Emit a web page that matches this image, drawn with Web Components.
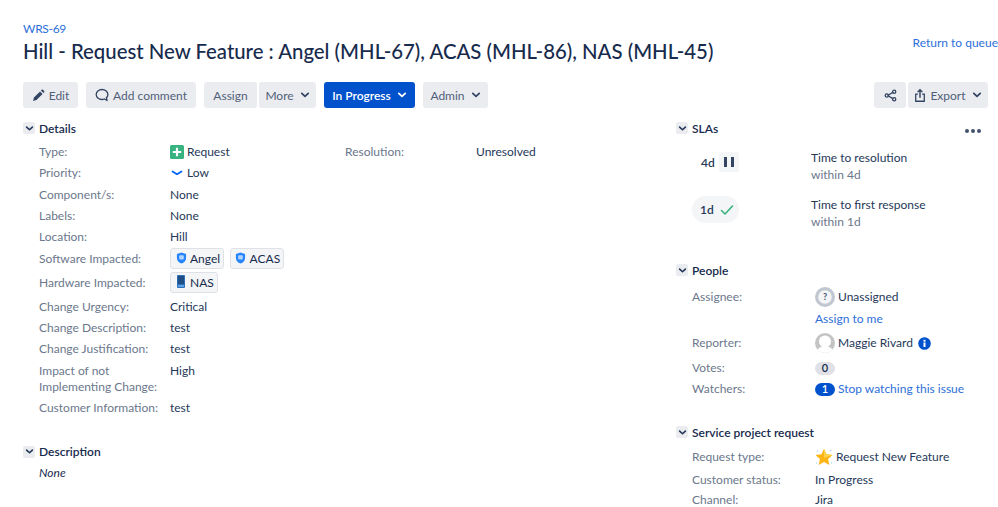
<!DOCTYPE html>
<html>
<head>
<meta charset="utf-8">
<title>WRS-69</title>
<style>
  html, body { margin: 0; padding: 0; background: #fff; overflow: hidden; }
  body { font-family: Lato, "Noto Sans", sans-serif; font-size: 12px; color: #172b4d; }
</style>
</head>
<body>
<issue-page></issue-page>

<script>
const ICONS = {
  chevron: `<svg width="10" height="10" viewBox="0 0 10 10"><path d="M1.8 3.4 5 6.4l3.2-3" fill="none" stroke="currentColor" stroke-width="1.8" stroke-linecap="round" stroke-linejoin="round"/></svg>`,
  pencil: `<svg width="13" height="13" viewBox="0 0 14 14"><path d="M1.2 12.8l.9-3.6 6.6-6.6 2.7 2.7-6.6 6.6zM9.6 1.7l.8-.8c.4-.4 1-.4 1.4 0l1.3 1.3c.4.4.4 1 0 1.4l-.8.8z" fill="#344563"/></svg>`,
  comment: `<svg width="14" height="14" viewBox="0 0 14 14"><path d="M7 1.500C3.700 1.500 1.200 3.700 1.200 6.500s2.500 5 5.800 5c1 0 1.700-.2 2.500-.5l2.600 1.500-.7-2.700c1-.9 1.500-2.100 1.500-3.300 0-2.800-2.600-5-5.900-5z" fill="none" stroke="#344563" stroke-width="1.300" stroke-linejoin="round"/></svg>`,
  share: `<svg width="13" height="13" viewBox="0 0 14 14"><g fill="none" stroke="#344563" stroke-width="1.400"><path d="M4 7l6-3.600M4 7l6 3.600"/><circle cx="3" cy="7" r="1.700"/><circle cx="11" cy="3" r="1.700"/><circle cx="11" cy="11" r="1.700"/></g></svg>`,
  exportIcon: `<svg width="12" height="15" viewBox="0 0 14 16"><path d="M4.500 6.500H2v8.200h10V6.500H9.500" fill="none" stroke="#344563" stroke-width="1.500"/><path d="M7 10.500V1.500M4.300 4 7 1.300 9.700 4" fill="none" stroke="#344563" stroke-width="1.700"/></svg>`,
  request: `<svg width="14" height="14" viewBox="0 0 14 14"><rect width="14" height="14" rx="1.500" fill="#36b37e"/><path d="M7 2.800v8.400M2.800 7h8.400" stroke="#fff" stroke-width="2.200"/></svg>`,
  low: `<svg width="14" height="14" viewBox="0 0 14 14"><path d="M2.500 5.500 7 8.200l4.500-2.700" fill="none" stroke="#0065ff" stroke-width="1.800" stroke-linecap="round" stroke-linejoin="round"/></svg>`,
  shield: `<svg width="11" height="12" viewBox="0 0 12 13"><path d="M6 .5l5 1.700v4.300c0 3-2.200 5-5 6-2.800-1-5-3-5-6V2.200z" fill="#2684ff"/><rect x="3.500" y="3.500" width="5" height="4.500" rx="1" fill="#b3d4ff"/></svg>`,
  device: `<svg width="8" height="13" viewBox="0 0 8 13"><rect width="8" height="13" rx="1" fill="#2f6fb5"/><rect x="1" y="1" width="6" height="8" fill="#1d4f86"/><rect x="1" y="10" width="6" height="2" fill="#5aa3e8"/></svg>`,
  check: `<svg width="14" height="12" viewBox="0 0 14 12"><path d="M1.500 6.500 5 10l7.500-8" fill="none" stroke="#36b37e" stroke-width="1.600" stroke-linecap="round" stroke-linejoin="round"/></svg>`,
  unknown: `<svg width="20" height="20" viewBox="0 0 20 20"><circle cx="10" cy="10" r="10" fill="#c1c7d0"/><circle cx="10" cy="10" r="6.800" fill="#f4f5f7"/><text x="10" y="13.200" text-anchor="middle" font-size="9" font-weight="700" font-family="Lato, sans-serif" fill="#42526e">?</text></svg>`,
  person: `<svg width="20" height="20" viewBox="0 0 20 20"><defs><clipPath id="c"><circle cx="10" cy="10" r="10"/></clipPath></defs><g clip-path="url(#c)"><rect width="20" height="20" fill="#c4c4c4"/><circle cx="10" cy="8.500" r="6" fill="#fff"/><path d="M2 20c0-5 4-7 8-7s8 2 8 7z" fill="#fff"/></g></svg>`,
  info: `<svg width="13" height="13" viewBox="0 0 13 13"><circle cx="6.500" cy="6.500" r="6.300" fill="#0052cc"/><rect x="5.500" y="5.500" width="2" height="4.500" fill="#fff"/><rect x="5.500" y="2.800" width="2" height="1.900" fill="#fff"/></svg>`,
  star: `<svg width="18" height="18" viewBox="0 0 18 18"><path d="M9 .8l2.500 5.500 6 .7-4.400 4 1.200 6L9 14l-5.300 3 1.200-6L.5 7l6-.7z" fill="#fdb515"/><path d="M9 .8l2.500 5.500 6 .7L9 10z" fill="#ffd34d"/><g fill="#a9d8f5"><circle cx="2.500" cy="3" r=".8"/><circle cx="15.500" cy="2.500" r=".8"/><circle cx="1.500" cy="15" r=".7"/><circle cx="16.500" cy="15" r=".7"/></g></svg>`
};

class ToolBtn extends HTMLElement {
  constructor() {
    super();
    this.attachShadow({ mode: "open" });
    const icon = this.getAttribute("icon");
    const caret = this.hasAttribute("caret");
    this.shadowRoot.innerHTML = `
      <style>
        :host { display: inline-flex; align-items: center; justify-content: center; height: 26px; gap: 4px;
          background: #ebecf0; border-radius: 3px; color: #505f79; white-space: nowrap; box-sizing: border-box; }
        :host([primary]) { background: #0052cc; color: #fff; font-weight: 600; }
        .caret { display: inline-flex; margin-left: 2px; color: #344563; }
        :host([primary]) .caret { color: #fff; }
        .ic { display: inline-flex; }
      </style>
      ${icon ? `<span class="ic">${ICONS[icon]}</span>` : ""}<slot></slot>
      ${caret ? `<span class="caret">${ICONS.chevron}</span>` : ""}`;
  }
}
customElements.define("tool-btn", ToolBtn);

class IssueModule extends HTMLElement {
  constructor() {
    super();
    this.attachShadow({ mode: "open" });
    this.shadowRoot.innerHTML = `
      <style>
        :host { display: block; }
        .head { display: flex; align-items: center; gap: 4px; height: 16px; font-weight: 600; color: #172b4d; }
        .tog { width: 12px; height: 12px; background: #ebecf0; border-radius: 2px; display: flex; align-items: center; justify-content: center; color: #253858; }
        .tog svg { width: 9px; height: 9px; }
        .body { padding-left: 16px; }
        ::slotted([slot=extra]) { margin-left: auto; }
      </style>
      <div class="head"><span class="tog">${ICONS.chevron}</span><span>${this.getAttribute("heading")}</span><slot name="extra"></slot></div>
      <div class="body"><slot></slot></div>`;
  }
}
customElements.define("issue-module", IssueModule);

class FieldRow extends HTMLElement {
  constructor() {
    super();
    this.attachShadow({ mode: "open" });
    this.shadowRoot.innerHTML = `
      <style>
        :host { display: grid; grid-template-columns: var(--label-w, 131px) 1fr; min-height: 16px; line-height: 16px; align-items: center; }
        :host([top]) { align-items: start; }
        :host([last]) { min-height: 14px; line-height: 14px; }
        .l { color: #6b778c; white-space: nowrap; }
        .v { color: #253858; display: flex; flex-wrap: wrap; align-items: center; }
      </style>
      <div class="l"><slot name="label"></slot>${this.getAttribute("label") || ""}</div>
      <div class="v"><slot></slot></div>`;
  }
}
customElements.define("field-row", FieldRow);

class ValueTag extends HTMLElement {
  constructor() {
    super();
    this.attachShadow({ mode: "open" });
    this.shadowRoot.innerHTML = `
      <style>
        :host { display: inline-flex; align-items: center; gap: 3px; height: 21px; padding: 0 3px 0 4px; margin-right: 5.500px;
          background: #f4f5f7; border: 1px solid #dfe1e6; border-radius: 3px; box-sizing: border-box; color: #172b4d; }
        span { display: inline-flex; width: 12px; justify-content: center; margin-top: -2px; }
      </style>
      <span>${ICONS[this.getAttribute("icon")]}</span><slot></slot>`;
  }
}
customElements.define("value-tag", ValueTag);

class IssuePage extends HTMLElement {
  constructor() {
    super();
    this.attachShadow({ mode: "open" });
    const i = (n) => `<span class="i">${ICONS[n]}</span>`;
    this.shadowRoot.innerHTML = `
      <style>
        :host { display: block; width: 998px; height: 507px; padding: 21px 0 0 23px; box-sizing: border-box; overflow: hidden; }
        a { color: #2d6fd8; text-decoration: none; }
        .key { display: block; height: 15px; line-height: 15px; letter-spacing: -.3px; }
        .titlebar { display: flex; justify-content: space-between; height: 46px; }
        h1 { margin: 0; font-size: 20.350px; font-weight: 500; line-height: 30px; color: #172b4d; white-space: nowrap; }
        .ret { line-height: 16px; margin-top: -1px; }
        .bar { display: flex; justify-content: space-between; padding-right: 10px; }
        .group { display: flex; }
        .group tool-btn + tool-btn.join { margin-left: 2px; }
        .sp { margin-left: 8px; }
        .cols { display: grid; grid-template-columns: 653px 322px; margin-top: 12px; }
        .two { display: grid; grid-template-columns: 306px 1fr; margin-top: 8px; }
        .list { display: flex; flex-direction: column; }
        .i { display: inline-flex; margin-right: 3px; }
        .desc { margin-top: 28px; }
        .none { font-style: italic; margin-top: 5px; line-height: 16px; }
        .side { --label-w: 123px; }
        .sla { display: grid; grid-template-columns: 119px 1fr; margin-top: 13px; line-height: 17px; color: #253858; }
        .sla .w { color: #6b778c; }
        .sla-row { height: 47px; }
        .clock { display: flex; align-items: center; font-weight: 600; padding-left: 9px; height: 20px; margin-top: 3px; }
        .pause { width: 20px; height: 20px; background: #f4f5f7; border-radius: 3px; margin-left: 4px; display: flex; justify-content: center; align-items: center; gap: 4px; }
        .pause b { width: 3px; height: 10px; background: #344563; display: block; }
        .pill { display: inline-flex; align-items: center; gap: 6px; width: 47px; box-sizing: border-box; height: 27px; padding-left: 8px; background: #f4f5f7; border-radius: 14px; font-weight: 600; }
        .dots { display: flex; gap: 2px; padding-right: 17px; margin-top: 6px; }
        .dots i { width: 4px; height: 4px; border-radius: 50%; background: #42526e; display: block; }
        .badge { display: inline-flex; align-items: center; justify-content: center; width: 20px; height: 13px; border-radius: 7px; background: #dfe1e6; font-size: 11px; font-weight: 600; color: #172b4d; }
        .badge.on { background: #0052cc; color: #fff; margin-right: 3px; }
        .gapi { display: inline-flex; margin-left: 5px; }
      </style>
      <a class="key">WRS-69</a>
      <div class="titlebar">
        <h1>Hill - Request New Feature : Angel (MHL-67), ACAS (MHL-86), NAS (MHL-45)</h1>
        <a class="ret">Return to queue</a>
      </div>
      <div class="bar">
        <div class="group">
          <tool-btn icon="pencil" style="width:55px">Edit</tool-btn>
          <tool-btn class="sp" icon="comment" style="width:110px">Add comment</tool-btn>
          <tool-btn class="sp" style="width:53px">Assign</tool-btn>
          <tool-btn class="join" caret style="width:57px">More</tool-btn>
          <tool-btn class="sp" primary caret style="width:91px">In Progress</tool-btn>
          <tool-btn class="sp" caret style="width:65px">Admin</tool-btn>
        </div>
        <div class="group">
          <tool-btn icon="share" style="width:32px"></tool-btn>
          <tool-btn class="join" icon="exportIcon" caret style="width:80px">Export</tool-btn>
        </div>
      </div>
      <div class="cols">
        <div>
          <issue-module heading="Details">
            <div class="two">
              <div class="list" style="gap:5.300px">
                <field-row label="Type:">${i("request")}Request</field-row>
                <field-row label="Priority:">${i("low")}Low</field-row>
                <field-row label="Component/s:">None</field-row>
                <field-row label="Labels:">None</field-row>
                <field-row label="Location:">Hill</field-row>
                <field-row label="Software Impacted:" style="margin-top:-2px"><value-tag icon="shield">Angel</value-tag><value-tag icon="shield">ACAS</value-tag></field-row>
                <field-row label="Hardware Impacted:" style="margin-top:-2.300px"><value-tag icon="device">NAS</value-tag></field-row>
                <field-row label="Change Urgency:">Critical</field-row>
                <field-row label="Change Description:">test</field-row>
                <field-row label="Change Justification:">test</field-row>
                <field-row top><span slot="label">Impact of not<br>Implementing Change:</span>High</field-row>
                <field-row label="Customer Information:">test</field-row>
              </div>
              <div><field-row label="Resolution:">Unresolved</field-row></div>
            </div>
          </issue-module>
          <issue-module class="desc" heading="Description"><div class="none">None</div></issue-module>
        </div>
        <div class="side">
          <issue-module heading="SLAs">
            <div class="dots" slot="extra"><i></i><i></i><i></i></div>
            <div class="sla">
              <div class="sla-row"><div class="clock">4d<span class="pause"><b></b><b></b></span></div></div>
              <div class="sla-row"><div>Time to resolution</div><div class="w">within 4d</div></div>
              <div class="sla-row"><span class="pill">1d ${ICONS.check}</span></div>
              <div class="sla-row"><div>Time to first response</div><div class="w">within 1d</div></div>
            </div>
          </issue-module>
          <issue-module style="margin-top:19px" heading="People">
            <div class="list" style="margin-top:9px">
              <field-row label="Assignee:">${i("unknown")}Unassigned</field-row>
              <field-row style="margin-top:4px"><a>Assign to me</a></field-row>
              <field-row label="Reporter:" style="margin-top:6px">${i("person")}Maggie Rivard<span class="gapi">${ICONS.info}</span></field-row>
              <field-row label="Votes:" style="margin-top:7px"><span class="badge">0</span></field-row>
              <field-row label="Watchers:" style="margin-top:5px"><span class="badge on">1</span><a>Stop watching this issue</a></field-row>
            </div>
          </issue-module>
          <issue-module style="margin-top:27px" heading="Service project request">
            <div class="list" style="margin-top:8px">
              <field-row label="Request type:">${i("star")}Request New Feature</field-row>
              <field-row label="Customer status:" style="margin-top:6px">In Progress</field-row>
              <field-row label="Channel:" last style="margin-top:5px">Jira</field-row>
            </div>
          </issue-module>
        </div>
      </div>`;
  }
}
customElements.define("issue-page", IssuePage);
</script>
</body>
</html>
